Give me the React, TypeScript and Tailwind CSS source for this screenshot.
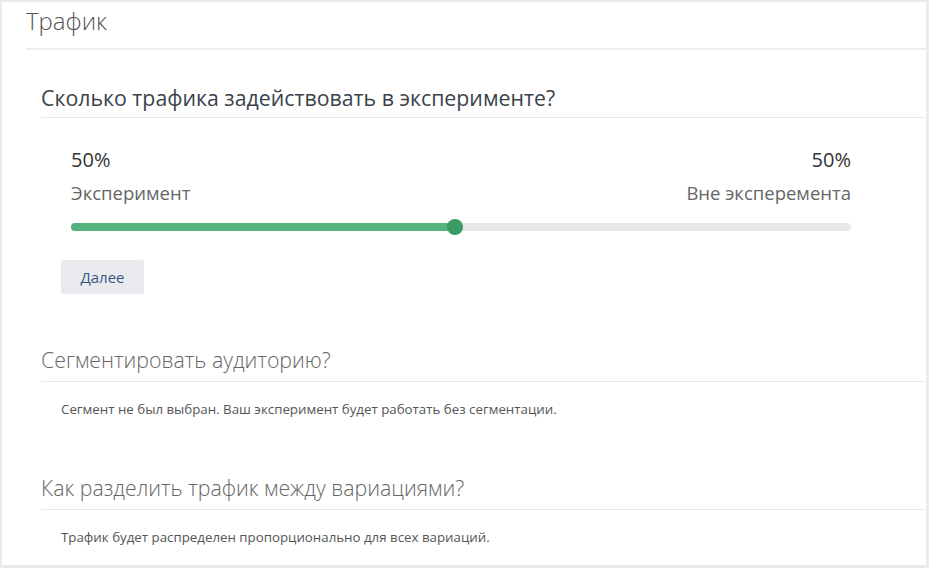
import React from 'react'

const font = { fontFamily: '"Open Sans", "Noto Sans", sans-serif' }

function SectionTitle({ children, light }: { children: React.ReactNode; light?: boolean }) {
  return (
    <div
      className={`ml-[39px] border-b border-[#e8e8e8] text-[21.3px] ${
        light ? 'font-light text-[#666]' : 'text-[#3a434b]'
      }`}
    >
      {children}
    </div>
  )
}

function TrafficSlider({ position }: { position: number }) {
  return (
    <div className="relative h-[8px] rounded-full bg-[#e8e8e8]">
      <div className="h-full rounded-full bg-[#55b27f]" style={{ width: `${position}%` }} />
      <div
        className="absolute top-1/2 h-[16px] w-[16px] -translate-x-1/2 -translate-y-1/2 rounded-full bg-[#3b9b64]"
        style={{ left: `${position}%` }}
      />
    </div>
  )
}

export default function App() {
  const value = 50
  return (
    <div className="h-[568px] w-[929px] bg-[#ebebeb] pt-[2px] pl-[2px] pr-[3px] pb-[3px]" style={font}>
      <div className="flex h-full flex-col bg-white">
        {/* header */}
        <div className="ml-[24px] h-[48px] border-b-2 border-[#ededed] pt-[2px] text-[24px] font-light leading-[34px] text-[#555]">
          Трафик
        </div>

        {/* traffic amount */}
        <div className="pt-[33px]">
          <SectionTitle>
            <div className="pb-[4px] leading-[30px]">Сколько трафика задействовать в эксперименте?</div>
          </SectionTitle>
          <div className="pl-[69px] pr-[75px] pt-[29px]">
            <div className="flex justify-between">
              <div>
                <div className="text-[20px] leading-[26px] text-[#333]">{value}%</div>
                <div className="mt-[7px] text-[18.5px] leading-[26px] text-[#666]">Эксперимент</div>
              </div>
              <div className="text-right">
                <div className="text-[20px] leading-[26px] text-[#333]">{100 - value}%</div>
                <div className="mt-[7px] text-[18.5px] leading-[26px] text-[#666]">Вне эксперемента</div>
              </div>
            </div>
            <div className="mt-[17px]">
              <TrafficSlider position={49.25} />
            </div>
          </div>
          <div className="pl-[59px] pt-[29px]">
            <button className="h-[34px] w-[83px] rounded-[3px] bg-[#e8eaee] text-[15px] text-[#3a5585]">
              Далее
            </button>
          </div>
        </div>

        {/* segment */}
        <div className="pt-[50px]">
          <SectionTitle light>
            <div className="pb-[5px] leading-[32px]">Сегментировать аудиторию?</div>
          </SectionTitle>
          <div className="pl-[59px] pt-[17px] text-[13.3px] leading-[20px] text-[#555]">
            Сегмент не был выбран. Ваш эксперимент будет работать без сегментации.
          </div>
        </div>

        {/* variations */}
        <div className="pt-[53px]">
          <SectionTitle light>
            <div className="pb-[5px] leading-[32px]">Как разделить трафик между вариациями?</div>
          </SectionTitle>
          <div className="pl-[59px] pt-[17px] text-[13.3px] leading-[20px] text-[#555]">
            Трафик будет распределен пропорционально для всех вариаций.
          </div>
        </div>
      </div>
    </div>
  )
}
